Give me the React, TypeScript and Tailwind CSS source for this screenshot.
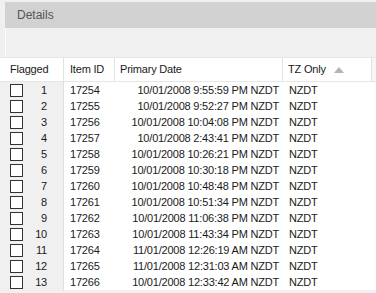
import React from "react";

type Row = {
  id: number;
  itemId: string;
  date: string;
  tz: string;
};

const rows: Row[] = [
  { id: 1, itemId: "17254", date: "10/01/2008 9:55:59 PM NZDT", tz: "NZDT" },
  { id: 2, itemId: "17255", date: "10/01/2008 9:52:27 PM NZDT", tz: "NZDT" },
  { id: 3, itemId: "17256", date: "10/01/2008 10:04:08 PM NZDT", tz: "NZDT" },
  { id: 4, itemId: "17257", date: "10/01/2008 2:43:41 PM NZDT", tz: "NZDT" },
  { id: 5, itemId: "17258", date: "10/01/2008 10:26:21 PM NZDT", tz: "NZDT" },
  { id: 6, itemId: "17259", date: "10/01/2008 10:30:18 PM NZDT", tz: "NZDT" },
  { id: 7, itemId: "17260", date: "10/01/2008 10:48:48 PM NZDT", tz: "NZDT" },
  { id: 8, itemId: "17261", date: "10/01/2008 10:51:34 PM NZDT", tz: "NZDT" },
  { id: 9, itemId: "17262", date: "10/01/2008 11:06:38 PM NZDT", tz: "NZDT" },
  { id: 10, itemId: "17263", date: "10/01/2008 11:43:34 PM NZDT", tz: "NZDT" },
  { id: 11, itemId: "17264", date: "11/01/2008 12:26:19 AM NZDT", tz: "NZDT" },
  { id: 12, itemId: "17265", date: "11/01/2008 12:31:03 AM NZDT", tz: "NZDT" },
  { id: 13, itemId: "17266", date: "10/01/2008 12:33:42 AM NZDT", tz: "NZDT" },
];

const grid = "grid grid-cols-[64px_51px_168px_89px_4px]";

const App = () => {
  return (
    <div
      className="w-[376px] h-[293px] overflow-hidden bg-[#f0f0f0] pt-[2px] text-[11px] tracking-[-0.2px] text-[#1a1a1a] whitespace-nowrap"
      style={{ fontFamily: "'Liberation Sans', Arial, sans-serif" }}
    >
      {/* Panel title */}
      <div className="ml-[5px] h-[26px] bg-[#d2d2d2] flex items-center pl-[12px] text-[12px] tracking-normal text-[#555]">
        Details
      </div>

      {/* Toolbar area */}
      <div className="ml-[5px] h-[29px] border-l border-white bg-[#f0f0f0]" />

      {/* Column headers */}
      <div className={`${grid} h-[25px] bg-white border-t border-[#dcdcdc] border-b border-[#e6e6e6]`}>
        <div className="flex items-center pl-[10px] border-r border-[#e3e3e3]">Flagged</div>
        <div className="flex items-center pl-[6px] border-r border-[#e3e3e3]">Item ID</div>
        <div className="flex items-center pl-[5px] border-r border-[#e3e3e3]">Primary Date</div>
        <div className="flex items-center pl-[5px] gap-[8px] border-r border-[#e3e3e3]">
          <span>TZ Only</span>
          <svg width="10" height="6" viewBox="0 0 10 6" className="shrink-0">
            <path d="M5 0 L10 6 L0 6 Z" fill="#b4b4b4" />
          </svg>
        </div>
        <div className="bg-[#f7f7f7]" />
      </div>

      {/* Rows */}
      <div className="bg-white">
        {rows.map((r) => (
          <div key={r.id} className={`${grid} h-[16px]`}>
            <div className="flex items-center bg-[#f0f0f0] border-r border-[#e0e0e0] pl-[10px] pr-[16px]">
              <span className="block shrink-0 w-[13px] h-[13px] border border-[#333] bg-white" />
              <span className="ml-auto">{r.id}</span>
            </div>
            <div className="flex items-center pl-[6px]">{r.itemId}</div>
            <div className="flex items-center justify-end pr-[4px]">{r.date}</div>
            <div className="flex items-center pl-[6px]">{r.tz}</div>
            <div />
          </div>
        ))}
      </div>
    </div>
  );
};

export default App;
